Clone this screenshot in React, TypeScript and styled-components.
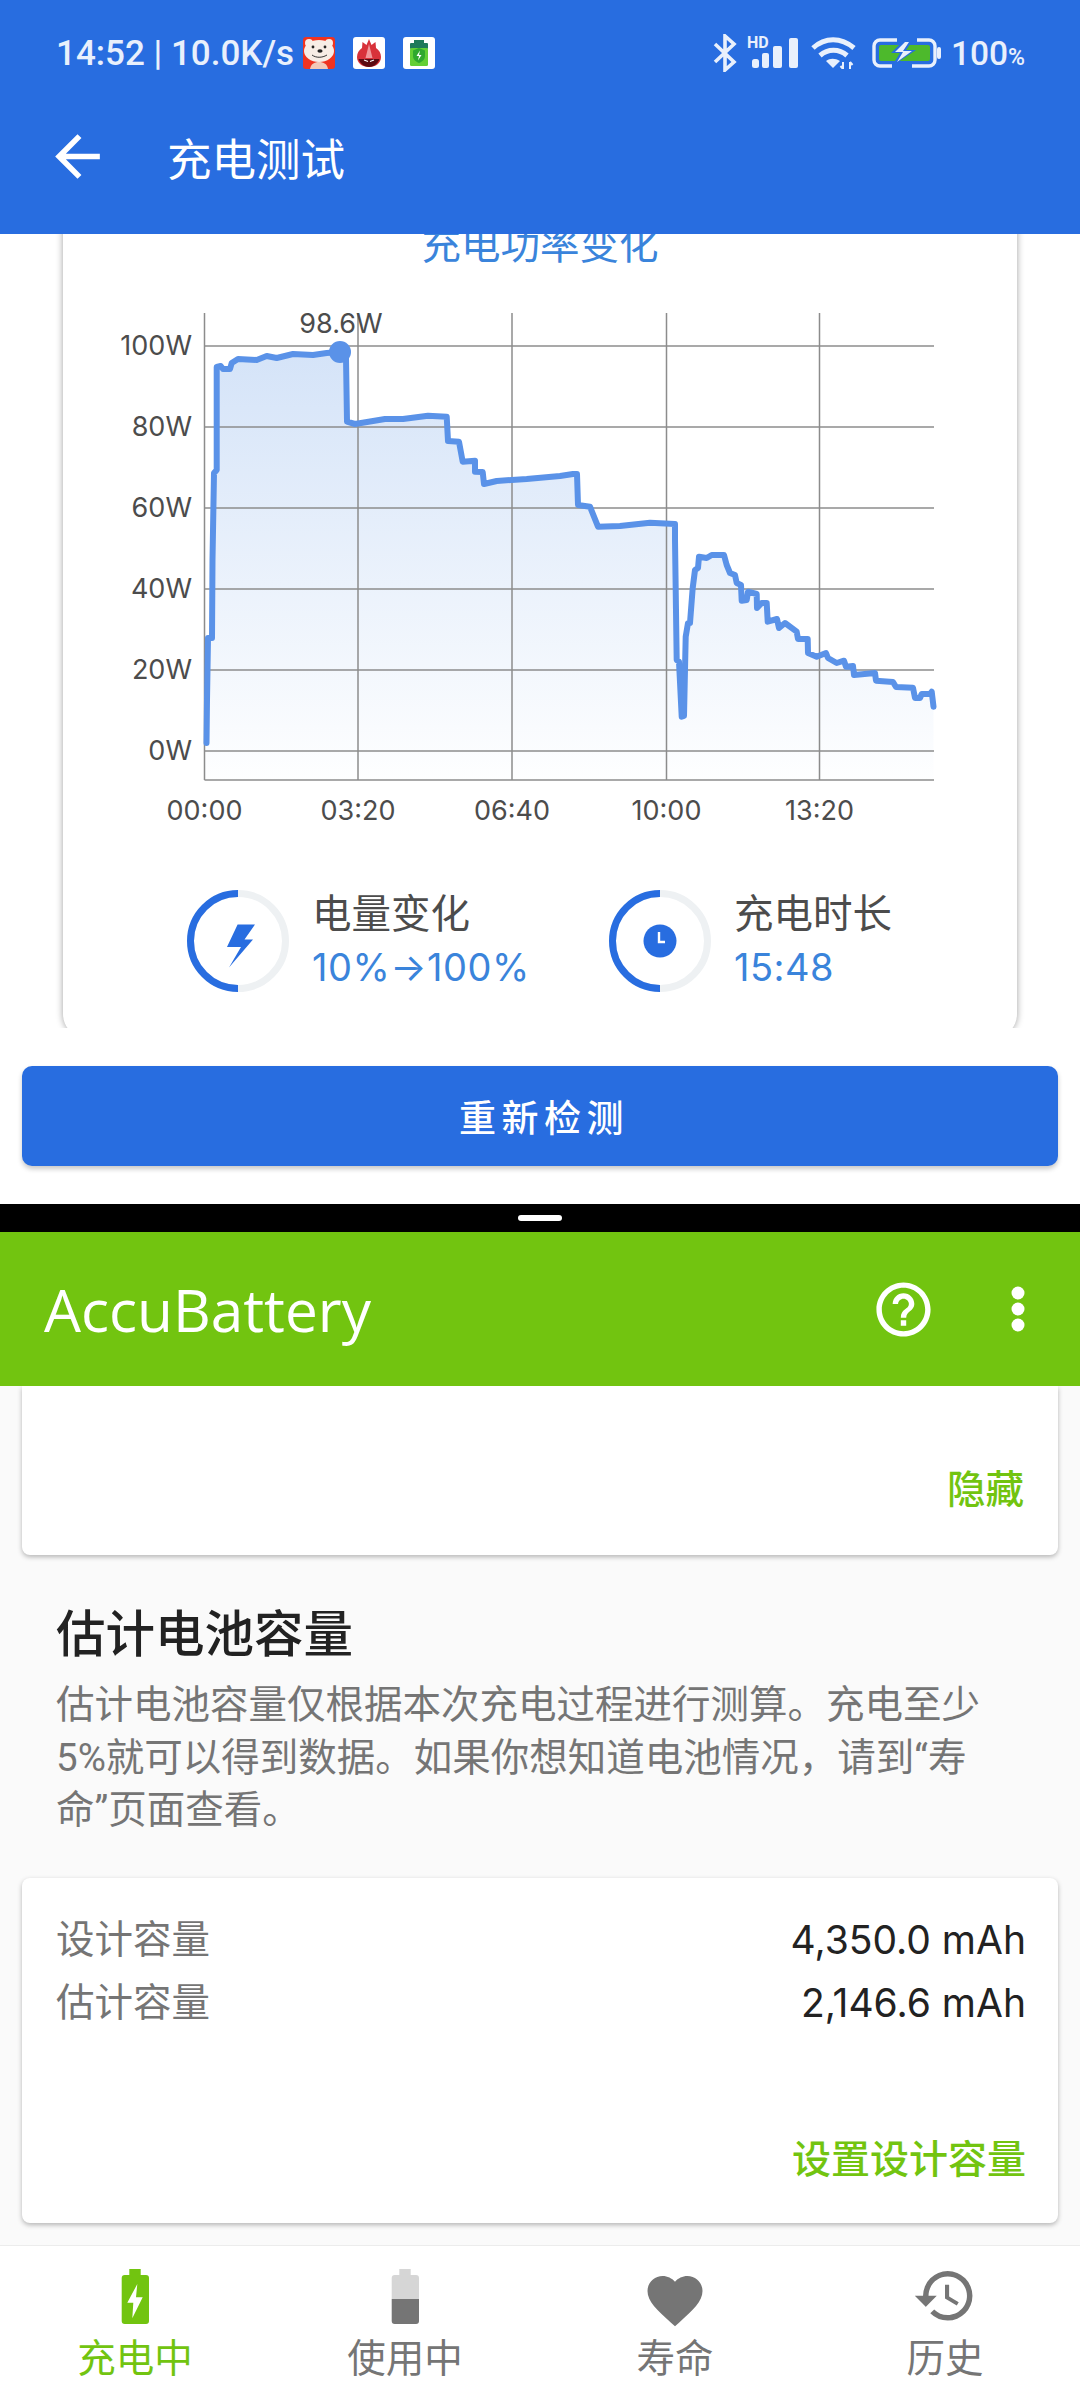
import styled, { createGlobalStyle } from "styled-components";

const BLUE = "#286de0";
const GREEN = "#72c410";
const GREY = "#757575";
const WIDE_FONT = `Inter, "Noto Sans CJK SC", sans-serif`;

const GlobalStyle = createGlobalStyle`
  html, body {
    margin: 0;
    padding: 0;
    background: #fff;
  }
  * {
    box-sizing: border-box;
  }
`;

const Page = styled.div`
  width: 1080px;
  height: 2400px;
  display: flex;
  flex-direction: column;
  overflow: hidden;
  font-family: Roboto, "Noto Sans CJK SC", sans-serif;
  background: #fff;
`;

const TopPane = styled.section`
  height: 1204px;
  display: flex;
  flex-direction: column;
  background: #fff;
`;

const Header = styled.header`
  background: ${BLUE};
  color: #fff;
  position: relative;
  z-index: 2;
`;

const StatusBar = styled.div`
  height: 80px;
  padding: 26px 55px 0 56px;
  display: flex;
  align-items: center;
  justify-content: space-between;
  color: #e9f0fc;
`;

const StatusLeft = styled.div`
  display: flex;
  align-items: center;
`;

const StatusText = styled.span`
  font-size: 35px;
  font-weight: 500;
  white-space: nowrap;
  margin-right: 9px;
`;

const AppIcon = styled.svg`
  width: 32px;
  height: 32px;
  margin-right: 18px;
  display: block;
`;

const StatusRight = styled.div`
  display: flex;
  align-items: center;
`;

const HdSignal = styled.div`
  position: relative;
  margin-left: 13px;
  width: 48px;
  height: 32px;
`;

const HdLabel = styled.span`
  position: absolute;
  left: -3px;
  top: -2px;
  font-size: 16px;
  line-height: 16px;
  font-weight: 700;
`;

const Percent = styled.span`
  font-size: 33.5px;
  font-weight: 500;
  margin-left: 9px;
`;

const PercentSign = styled.span`
  font-size: 23px;
`;

const AppBar = styled.div`
  height: 154px;
  padding: 0 0 2px 44px;
  display: flex;
  align-items: center;
  gap: 56px;
`;

const AppBarTitle = styled.h1`
  margin: 0;
  font-size: 44.5px;
  font-weight: 400;
`;

const ChartScroll = styled.div`
  height: 794px;
  padding: 0 63px;
  overflow: hidden;
`;

const Card = styled.div`
  margin-top: -30px;
  padding: 14px 0 46px;
  height: 834px;
  background: #fff;
  border-radius: 24px;
  box-shadow: 0 0 7px rgba(0, 0, 0, 0.38);
`;

const CardTitle = styled.h2`
  margin: 0;
  font-size: 39.5px;
  line-height: 56px;
  font-weight: 400;
  color: #3a84db;
  text-align: center;
`;

const Chart = styled.svg`
  display: block;
  width: 954px;
  height: 550px;
  margin-top: 16px;
`;

const GridLine = styled.line`
  stroke: #8c8c8c;
  stroke-width: 1.5;
`;

const AxisText = styled.text`
  font-family: Inter, sans-serif;
  font-size: 27px;
  fill: #4c4c4c;
`;

const PowerLine = styled.polyline`
  fill: none;
  stroke: #5a92e8;
  stroke-width: 6;
  stroke-linejoin: round;
  stroke-linecap: round;
`;

const Stats = styled.div`
  margin-top: 49px;
  padding-left: 124px;
  display: grid;
  grid-template-columns: 422px 1fr;
`;

const Stat = styled.div`
  display: flex;
  align-items: center;
  gap: 23px;
`;

const Ring = styled.svg`
  width: 102px;
  height: 102px;
  display: block;
`;

const StatBody = styled.div`
  display: flex;
  flex-direction: column;
`;

const StatLabel = styled.span`
  font-size: 39.5px;
  line-height: 52px;
  color: #4c4c4c;
`;

const StatValue = styled.span`
  font-family: ${WIDE_FONT};
  font-size: 38px;
  line-height: 52px;
  letter-spacing: 0.5px;
  color: #3a84db;
`;

const RetestButton = styled.button`
  margin: 38px 22px 0;
  height: 100px;
  padding: 0 0 0 8px;
  border: 0;
  border-radius: 10px;
  background: ${BLUE};
  color: #fff;
  font-family: inherit;
  font-size: 37px;
  font-weight: 500;
  letter-spacing: 5.5px;
  box-shadow: 0 3px 5px rgba(0, 0, 0, 0.22);
`;

const Divider = styled.div`
  height: 28px;
  background: #000;
  display: flex;
  align-items: center;
  justify-content: center;
`;

const Handle = styled.div`
  width: 44px;
  height: 6px;
  border-radius: 3px;
  background: #fff;
`;

const GreenBar = styled.header`
  height: 154px;
  padding: 0 55px 0 44px;
  background: ${GREEN};
  color: #fff;
  display: flex;
  align-items: center;
  justify-content: space-between;
  position: relative;
  z-index: 2;
`;

const Brand = styled.div`
  font-family: "Open Sans", sans-serif;
  font-size: 58.5px;
  font-weight: 500;
`;

const BarActions = styled.div`
  display: flex;
  align-items: center;
  gap: 75px;
`;

const LowerScroll = styled.main`
  flex: 1;
  min-height: 0;
  background: #fafafa;
  overflow: hidden;
`;

const WhiteCard = styled.div`
  margin: 0 22px;
  background: #fff;
  border-radius: 0 0 8px 8px;
  box-shadow: 0 2px 5px rgba(0, 0, 0, 0.28);
  display: flex;
  flex-direction: column;
`;

const HiddenCard = styled(WhiteCard)`
  height: 169px;
  padding: 84px 34px 0 0;
`;

const TextAction = styled.span`
  align-self: flex-end;
  font-size: 38.5px;
  line-height: 40px;
  font-weight: 500;
  color: ${GREEN};
`;

const SectionTitle = styled.h3`
  margin: 50px 0 14px 56px;
  font-size: 49.5px;
  line-height: 60px;
  font-weight: 500;
  color: #222;
`;

const SectionText = styled.p`
  margin: 0 0 41px 56px;
  font-size: 38.5px;
  line-height: 52.5px;
  color: ${GREY};
  white-space: nowrap;
`;

const CapacityCard = styled(WhiteCard)`
  height: 345px;
  border-radius: 8px;
  padding: 30px 32px 43px 34px;
`;

const CapacityRow = styled.div`
  display: flex;
  justify-content: space-between;
  height: 63px;
  line-height: 63px;
`;

const CapacityLabel = styled.span`
  font-size: 38.5px;
  color: ${GREY};
`;

const CapacityValue = styled.span`
  font-family: ${WIDE_FONT};
  font-size: 39px;
  color: #222;
`;

const CapacityAction = styled(TextAction)`
  margin-top: auto;
  font-size: 39px;
`;

const BottomNav = styled.nav`
  height: 155px;
  border-top: 1px solid #ececec;
  background: #fff;
  display: grid;
  grid-template-columns: repeat(4, 270px);
  position: relative;
  z-index: 2;
`;

const NavItem = styled.div<{ $active?: boolean }>`
  display: flex;
  flex-direction: column;
  align-items: center;
  padding-top: 21px;
  color: ${({ $active }) => ($active ? GREEN : GREY)};
`;

const NavIcon = styled.svg`
  width: 66px;
  height: 64px;
  display: block;
`;

const NavLabel = styled.span`
  font-size: 38.5px;
  line-height: 50px;
  margin-top: 3px;
`;

// traced from the reference, page coordinates
const power: [number, number][] = [
  [206.5, 743], [207, 700], [208, 638], [212, 638], [212.5, 560], [214, 473], [216.7, 470],
  [216.7, 367], [220.7, 366], [223, 369], [230, 369], [231.7, 363], [238, 359], [256.7, 360],
  [266.7, 356], [276.7, 358], [293, 354], [313, 355], [326.7, 353], [340, 352], [346, 357],
  [347, 421.7], [355, 424], [385, 419], [403, 419], [428, 415.7], [446.7, 416.7], [448, 441],
  [459, 441.7], [462.7, 461.7], [475, 460.7], [475, 471.7], [482.7, 472], [484, 484], [496.7, 481],
  [526.7, 479], [560, 476], [573, 474], [577, 474], [578, 505], [590, 506.7], [598, 526.7],
  [620, 526], [650, 522.7], [675, 524], [675, 540], [676.7, 660], [679, 661.7], [681.7, 716.7],
  [684, 716], [685.7, 636.7], [688, 623], [690, 623], [692.7, 588], [695, 570], [698, 568],
  [699, 556.7], [706.7, 558], [711.7, 555], [724, 555], [726.7, 565], [730, 573], [735, 575],
  [736.7, 583], [741, 585], [741.7, 600.7], [746.7, 600], [748, 591.7], [756.7, 594], [757, 608],
  [761.7, 603], [766.7, 603], [767.7, 621.7], [777, 619], [779, 628], [785, 623], [796.7, 631.7],
  [798, 639], [807.7, 639], [808, 653], [816.7, 656.7], [826, 653], [828, 658], [836.7, 663],
  [844, 660.7], [846, 666.7], [853, 666], [854, 675], [875, 673], [876, 680.7], [893, 682],
  [896, 687], [913, 687.7], [915, 698], [920, 698], [921.7, 694], [930, 694], [931.7, 691.7],
  [933.5, 706.7],
];

const powerPoints = power.map((p) => p.join(",")).join(" ");
const areaPoints = `204.5,780 ${powerPoints} 933.5,780`;

const xLines = [
  { x: 204.5, label: "00:00" },
  { x: 358, label: "03:20" },
  { x: 512, label: "06:40" },
  { x: 666.5, label: "10:00" },
  { x: 819.5, label: "13:20" },
];

const yLines = [
  { y: 346, label: "100W" },
  { y: 427, label: "80W" },
  { y: 508, label: "60W" },
  { y: 589, label: "40W" },
  { y: 670, label: "20W" },
  { y: 751, label: "0W" },
];

const PowerChart = () => (
  <Chart viewBox="63 290 954 550">
    <defs>
      <linearGradient id="powerFill" gradientUnits="userSpaceOnUse" x1="0" y1="346" x2="0" y2="790">
        <stop offset="0" stopColor="#d4e3f8" />
        <stop offset="1" stopColor="#ffffff" />
      </linearGradient>
    </defs>
    <polygon points={areaPoints} fill="url(#powerFill)" />
    {xLines.map((l) => (
      <GridLine key={l.x} x1={l.x} x2={l.x} y1={313} y2={780} />
    ))}
    {yLines.map((l) => (
      <GridLine key={l.y} x1={204.5} x2={934} y1={l.y} y2={l.y} />
    ))}
    <GridLine x1={204.5} x2={934} y1={780} y2={780} />
    <PowerLine points={powerPoints} />
    <circle cx={340} cy={352} r={11} fill="#5a92e8" />
    <AxisText x={341} y={333} textAnchor="middle">98.6W</AxisText>
    {yLines.map((l) => (
      <AxisText key={l.label} x={192} y={l.y + 9} textAnchor="end">{l.label}</AxisText>
    ))}
    {xLines.map((l) => (
      <AxisText key={l.label} x={l.x} y={820} textAnchor="middle">{l.label}</AxisText>
    ))}
  </Chart>
);

const ProgressRing = ({ children }: { children: React.ReactNode }) => (
  <Ring viewBox="0 0 102 102">
    <circle cx="51" cy="51" r="47.5" fill="none" stroke="#eef1f3" strokeWidth="7" />
    <path d="M51 3.5a47.5 47.5 0 0 0 0 95" fill="none" stroke={BLUE} strokeWidth="7" />
    {children}
  </Ring>
);

const App = () => (
  <Page>
    <GlobalStyle />
    <TopPane>
      <Header>
        <StatusBar>
          <StatusLeft>
            <StatusText>14:52 | 10.0K/s</StatusText>
            <AppIcon viewBox="0 0 32 32">
              <rect width="32" height="32" rx="3" fill="#f03320" />
              <circle cx="6" cy="6" r="4" fill="#f7ede6" />
              <circle cx="26" cy="6" r="4" fill="#f7ede6" />
              <ellipse cx="16" cy="14" rx="15" ry="11" fill="#f7ede6" />
              <path d="M7 32c1-5 4-7 9-7s8 2 9 7z" fill="#f3c9b8" />
              <circle cx="10" cy="10" r="1.4" fill="#222" />
              <circle cx="22" cy="10" r="1.4" fill="#222" />
              <ellipse cx="17" cy="14" rx="2.6" ry="1.8" fill="#222" />
              <path d="M9 18c4 3 10 3 15 0" fill="none" stroke="#333" strokeWidth="1" />
            </AppIcon>
            <AppIcon viewBox="0 0 32 32">
              <rect width="32" height="32" rx="3" fill="#fff" />
              <path d="M16 2l2.500 6 4-3 .5 6c3 2 5 5 5 9 0 6-5 10-12 10S4 26 4 20c0-4 2-7 5-9l.5-6 4 3z" fill="#d8323a" />
              <path d="M16 7l-3.500 14h7z" fill="#f0989b" />
              <path d="M5.500 22h21c-1.500 4-5 8-10.500 8s-9-4-10.500-8z" fill="#5c0a12" />
              <path d="M11 23l4 1.500M21 23l-4 1.500" stroke="#fff" strokeWidth="1.200" />
            </AppIcon>
            <AppIcon viewBox="0 0 32 32">
              <rect width="32" height="32" rx="3" fill="#fff" />
              <rect x="11" y="3" width="10" height="4" fill="#1f7a5a" />
              <rect x="7" y="6" width="18" height="6" rx="1" fill="#1f7a5a" />
              <rect x="7" y="11" width="18" height="18" rx="1.500" fill="#63cf35" />
              <path d="M16 11l6 2.500v5.500c0 3.500-2.500 5.500-6 7-3.500-1.500-6-3.500-6-7v-5.500z" fill="#2ea82e" />
              <path d="M17 13.500l-3.500 5.500h2.500l-1 4.500 3.500-5.500h-2.500z" fill="#fff" />
            </AppIcon>
          </StatusLeft>
          <StatusRight>
            <svg width="24" height="38" viewBox="0 0 24 38">
              <path d="M2 10l19 18-9 8V2l9 8L2 28" fill="none" stroke="currentColor" strokeWidth="3.6" />
            </svg>
            <HdSignal>
              <HdLabel>HD</HdLabel>
              <svg width="48" height="32" viewBox="0 0 48 32">
                <rect x="2" y="22" width="7" height="9" rx="2.5" fill="currentColor" />
                <rect x="12" y="16" width="7" height="15" rx="2" fill="currentColor" />
                <rect x="23" y="9" width="9" height="22" rx="2" fill="currentColor" />
                <rect x="39" y="1" width="9" height="30" rx="2" fill="currentColor" />
              </svg>
            </HdSignal>
            <svg width="46" height="32" viewBox="0 0 46 32" style={{ marginLeft: 13 }}>
              <path d="M2 11c12-11 28-11 41 0" fill="none" stroke="currentColor" strokeWidth="5" />
              <path d="M9 18.500c8-7 19-7 27 0" fill="none" stroke="currentColor" strokeWidth="5" />
              <path d="M15 24c4-3 9-3 14 0l-7 7z" fill="currentColor" />
              <path d="M32 25v7M29.500 29l2.500 3M39 32v-7M41.500 28l-2.500-3" fill="none" stroke="currentColor" strokeWidth="2" />
            </svg>
            <svg width="70" height="30" viewBox="0 0 70 30" style={{ marginLeft: 15 }}>
              <path d="M25 2H8a6 6 0 0 0-6 6v14a6 6 0 0 0 6 6h12M45 2h12a6 6 0 0 1 6 6v14a6 6 0 0 1-6 6H40" fill="none" stroke="currentColor" strokeWidth="3.4" />
              <rect x="7" y="7" width="51" height="16" rx="2" fill="#4db92c" />
              <rect x="65" y="9" width="4" height="12" rx="2" fill="currentColor" />
              <path d="M32 2L19 15h9l-8 13 24-16h-10l7-10z" fill={BLUE} />
              <path d="M33 4L23 14h8l-6 10 15-11h-9l6-9z" fill="currentColor" />
            </svg>
            <Percent>
              100<PercentSign>%</PercentSign>
            </Percent>
          </StatusRight>
        </StatusBar>
        <AppBar>
          <svg width="67" height="67" viewBox="0 0 24 24" fill="currentColor">
            <path d="M20 11H7.830l5.590-5.590L12 4l-8 8 8 8 1.410-1.410L7.830 13H20v-2z" />
          </svg>
          <AppBarTitle>充电测试</AppBarTitle>
        </AppBar>
      </Header>
      <ChartScroll>
        <Card>
          <CardTitle>充电功率变化</CardTitle>
          <PowerChart />
          <Stats>
            <Stat>
              <ProgressRing>
                <path d="M50.600 34.500H68L57.500 49.500H66L42 77.500L54 57H40z" fill={BLUE} />
              </ProgressRing>
              <StatBody>
                <StatLabel>电量变化</StatLabel>
                <StatValue>10%→100%</StatValue>
              </StatBody>
            </Stat>
            <Stat>
              <ProgressRing>
                <circle cx="51" cy="51" r="16.500" fill={BLUE} />
                <path d="M50 42v10h6" fill="none" stroke="#fff" strokeWidth="2.400" />
              </ProgressRing>
              <StatBody>
                <StatLabel>充电时长</StatLabel>
                <StatValue>15:48</StatValue>
              </StatBody>
            </Stat>
          </Stats>
        </Card>
      </ChartScroll>
      <RetestButton>重新检测</RetestButton>
    </TopPane>
    <Divider>
      <Handle />
    </Divider>
    <GreenBar>
      <Brand>AccuBattery</Brand>
      <BarActions>
        <svg width="65" height="65" viewBox="0 0 24 24" fill="currentColor">
          <path d="M11 18h2v-2h-2v2zm1-16C6.480 2 2 6.480 2 12s4.480 10 10 10 10-4.480 10-10S17.520 2 12 2zm0 18c-4.410 0-8-3.590-8-8s3.590-8 8-8 8 3.590 8 8-3.590 8-8 8zm0-14c-2.210 0-4 1.790-4 4h2c0-1.100.9-2 2-2s2 .9 2 2c0 2-3 1.750-3 5h2c0-2.250 3-2.500 3-5 0-2.210-1.790-4-4-4z" />
        </svg>
        <svg width="14" height="46" viewBox="0 0 14 46" fill="currentColor">
          <circle cx="7" cy="7" r="6.500" />
          <circle cx="7" cy="23" r="6.500" />
          <circle cx="7" cy="39" r="6.500" />
        </svg>
      </BarActions>
    </GreenBar>
    <LowerScroll>
      <HiddenCard>
        <TextAction>隐藏</TextAction>
      </HiddenCard>
      <SectionTitle>估计电池容量</SectionTitle>
      <SectionText>
        估计电池容量仅根据本次充电过程进行测算。充电至少
        <br />
        5%就可以得到数据。如果你想知道电池情况，请到“寿
        <br />
        命”页面查看。
      </SectionText>
      <CapacityCard>
        <CapacityRow>
          <CapacityLabel>设计容量</CapacityLabel>
          <CapacityValue>4,350.0 mAh</CapacityValue>
        </CapacityRow>
        <CapacityRow>
          <CapacityLabel>估计容量</CapacityLabel>
          <CapacityValue>2,146.6 mAh</CapacityValue>
        </CapacityRow>
        <CapacityAction>设置设计容量</CapacityAction>
      </CapacityCard>
    </LowerScroll>
    <BottomNav>
      <NavItem $active>
        <NavIcon viewBox="0 0 66 64">
          <path d="M27.300 2h11.400v6h5.300a3 3 0 0 1 3 3v43a3 3 0 0 1-3 3H22.700a3 3 0 0 1-3-3V11a3 3 0 0 1 3-3h4.600z" fill={GREEN} />
          <path d="M35.300 17L25.300 35.700H31.300L30.300 51.300L40.700 30.300H34z" fill="#fff" />
        </NavIcon>
        <NavLabel>充电中</NavLabel>
      </NavItem>
      <NavItem>
        <NavIcon viewBox="0 0 66 64">
          <path d="M27.300 2h11.400v6h5.300a3 3 0 0 1 3 3v21H19.700V11a3 3 0 0 1 3-3h4.600z" fill="#d6d6d6" />
          <path d="M19.700 32H47v22a3 3 0 0 1-3 3H22.700a3 3 0 0 1-3-3z" fill={GREY} />
        </NavIcon>
        <NavLabel>使用中</NavLabel>
      </NavItem>
      <NavItem>
        <NavIcon viewBox="0 -0.200 24 23.200" fill="currentColor">
          <path d="M12 21.350l-1.450-1.320C5.400 15.360 2 12.280 2 8.500 2 5.420 4.420 3 7.500 3c1.740 0 3.410.81 4.500 2.090C13.090 3.810 14.760 3 16.500 3 19.580 3 22 5.420 22 8.500c0 3.780-3.400 6.860-8.550 11.540L12 21.350z" />
        </NavIcon>
        <NavLabel>寿命</NavLabel>
      </NavItem>
      <NavItem>
        <NavIcon viewBox="0 1.500 24 23.300" fill="currentColor">
          <path d="M13 3a9 9 0 0 0-9 9H1l3.890 3.890.07.14L9 12H6c0-3.870 3.130-7 7-7s7 3.130 7 7-3.130 7-7 7c-1.930 0-3.680-.79-4.940-2.060l-1.420 1.420A8.954 8.954 0 0 0 13 21a9 9 0 0 0 0-18zm-1 5v5l4.280 2.540.72-1.210-3.500-2.080V8H12z" />
        </NavIcon>
        <NavLabel>历史</NavLabel>
      </NavItem>
    </BottomNav>
  </Page>
);

export default App;
